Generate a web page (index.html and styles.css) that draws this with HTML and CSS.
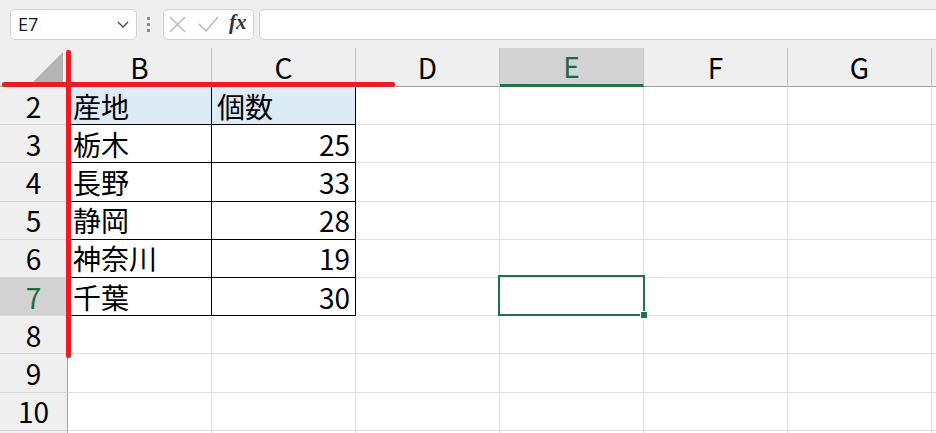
FILE: index.html
```html
<!DOCTYPE html>
<html lang="ja">
<head>
<meta charset="utf-8">
<title>Sheet</title>
<link rel="stylesheet" href="styles.css">
</head>
<body>
<div class="app">
  <div class="toolbar">
    <div class="namebox">
      <span class="name">E7</span>
      <svg class="chev" width="12" height="7" viewBox="0 0 12 7"><path d="M1 1l5 5 5-5" fill="none" stroke="#444" stroke-width="1.3"/></svg>
    </div>
    <div class="grip"><i></i><i></i><i></i></div>
    <div class="fxbox">
      <svg class="ic-x" width="17" height="17" viewBox="0 0 17 17"><path d="M1 1L16 16M16 1L1 16" fill="none" stroke="#b5b5b5" stroke-width="1.4"/></svg>
      <svg class="ic-ok" width="21" height="16" viewBox="0 0 21 16"><path d="M1 8l7 7L20 1" fill="none" stroke="#b5b5b5" stroke-width="1.4"/></svg>
      <span class="fx">fx</span>
    </div>
    <div class="formula"></div>
  </div>

  <div class="sheet">
    <div class="row hdr">
      <div class="cell corner"><svg width="30" height="30" viewBox="0 0 30 30"><polygon points="0,30 30,30 30,0" fill="#b4b4b4"/></svg></div>
      <div class="cell ch">B</div>
      <div class="cell ch">C</div>
      <div class="cell ch">D</div>
      <div class="cell ch on">E</div>
      <div class="cell ch">F</div>
      <div class="cell ch">G</div>
      <div class="cell ch"></div>
    </div>
    <div class="row">
      <div class="cell rh">2</div>
      <div class="cell t th">産地</div>
      <div class="cell t th">個数</div>
      <div class="cell"></div><div class="cell"></div><div class="cell"></div><div class="cell"></div><div class="cell"></div>
    </div>
    <div class="row">
      <div class="cell rh">3</div>
      <div class="cell t">栃木</div>
      <div class="cell t num">25</div>
      <div class="cell"></div><div class="cell"></div><div class="cell"></div><div class="cell"></div><div class="cell"></div>
    </div>
    <div class="row">
      <div class="cell rh">4</div>
      <div class="cell t">長野</div>
      <div class="cell t num">33</div>
      <div class="cell"></div><div class="cell"></div><div class="cell"></div><div class="cell"></div><div class="cell"></div>
    </div>
    <div class="row">
      <div class="cell rh">5</div>
      <div class="cell t">静岡</div>
      <div class="cell t num">28</div>
      <div class="cell"></div><div class="cell"></div><div class="cell"></div><div class="cell"></div><div class="cell"></div>
    </div>
    <div class="row">
      <div class="cell rh">6</div>
      <div class="cell t">神奈川</div>
      <div class="cell t num">19</div>
      <div class="cell"></div><div class="cell"></div><div class="cell"></div><div class="cell"></div><div class="cell"></div>
    </div>
    <div class="row">
      <div class="cell rh on">7</div>
      <div class="cell t">千葉</div>
      <div class="cell t num">30</div>
      <div class="cell"></div><div class="cell"></div><div class="cell"></div><div class="cell"></div><div class="cell"></div>
    </div>
    <div class="row">
      <div class="cell rh">8</div>
      <div class="cell"></div><div class="cell"></div><div class="cell"></div><div class="cell"></div><div class="cell"></div><div class="cell"></div><div class="cell"></div>
    </div>
    <div class="row">
      <div class="cell rh">9</div>
      <div class="cell"></div><div class="cell"></div><div class="cell"></div><div class="cell"></div><div class="cell"></div><div class="cell"></div><div class="cell"></div>
    </div>
    <div class="row">
      <div class="cell rh">10</div>
      <div class="cell"></div><div class="cell"></div><div class="cell"></div><div class="cell"></div><div class="cell"></div><div class="cell"></div><div class="cell"></div>
    </div>
    <div class="row">
      <div class="cell rh"></div>
      <div class="cell"></div><div class="cell"></div><div class="cell"></div><div class="cell"></div><div class="cell"></div><div class="cell"></div><div class="cell"></div>
    </div>

    <div class="sel"><i class="handle"></i></div>
  </div>

  <div class="red-h"></div>
  <div class="red-v"></div>
</div>
</body>
</html>
```

FILE: styles.css
```css
* { box-sizing: border-box; }
html, body { margin: 0; padding: 0; }
body {
  width: 936px;
  height: 433px;
  overflow: hidden;
  background: #fff;
  font-family: "Noto Sans CJK JP", "Noto Sans", sans-serif;
  color: #000;
}
.app {
  position: relative;
  width: 936px;
  height: 433px;
  overflow: hidden;
}

/* toolbar */
.toolbar {
  display: flex;
  align-items: center;
  height: 48px;
  background: #efefef;
  padding-left: 10px;
}
.namebox {
  flex: none;
  width: 127px;
  height: 31px;
  background: #fff;
  border: 1px solid #d3d3d3;
  border-radius: 5px;
  display: flex;
  align-items: center;
  justify-content: space-between;
  padding: 0 7px 0 7px;
}
.name {
  font-family: "Open Sans", "Noto Sans", sans-serif;
  font-size: 18px;
  color: #1a1a1a;
  line-height: 1;
}
.chev { margin-top: 1px; }
.grip {
  flex: none;
  width: 4px;
  margin: 0 12px 0 10px;
  display: flex;
  flex-direction: column;
  gap: 3px;
}
.grip i {
  display: block;
  width: 3px;
  height: 3px;
  background: #8c8c8c;
}
.fxbox {
  flex: none;
  width: 91px;
  height: 31px;
  background: #fff;
  border: 1px solid #d3d3d3;
  border-radius: 5px;
  display: flex;
  align-items: center;
  padding-left: 5px;
}
.ic-ok { margin-left: 12px; }
.fx {
  margin-left: 10px;
  font-family: "Liberation Serif", serif;
  font-style: italic;
  font-weight: bold;
  font-size: 21px;
  color: #333;
  line-height: 1;
  margin-top: -3px;
}
.formula {
  flex: 1;
  height: 31px;
  margin-left: 5px;
  margin-right: -6px;
  background: #fff;
  border: 1px solid #d3d3d3;
  border-radius: 5px;
}

/* sheet */
.sheet {
  position: relative;
  background: #fff;
}
.row {
  display: flex;
  height: 38.2px;
}
.row.hdr {
  height: 39px;
  background: #efefef;
}
.cell {
  flex: none;
  width: 144px;
  height: 100%;
  border-right: 1px solid #e1e1e1;
  border-bottom: 1px solid #e1e1e1;
  display: flex;
  align-items: center;
  padding: 0 5px;
  font-size: 28px;
  line-height: 1;
  white-space: nowrap;
}
.corner {
  width: 68px;
  justify-content: flex-end;
  align-items: flex-end;
  padding: 0 4px 4px 0;
  border-right-color: #d0d0d0;
  border-bottom-color: #a0a0a0;
}
.ch {
  justify-content: center;
  border-right-color: #c2c2c2;
  border-bottom-color: #a0a0a0;
}
.ch.on {
  background: #d2d2d2;
  color: #1d6b40;
  border-bottom: 3px solid #217346;
}
.rh {
  width: 68px;
  justify-content: center;
  background: #efefef;
  border-right-color: #a5a5a5;
  border-bottom-color: #d6d6d6;
}
.rh.on {
  background: #d2d2d2;
  color: #1d6b40;
}
.t {
  border-right-color: #000;
  border-bottom-color: #000;
}
.th { background: #ddebf7; }
.num { justify-content: flex-end; }

/* selection */
.sel {
  position: absolute;
  left: 498px;
  top: 227px;
  width: 147px;
  height: 41px;
  border: 2px solid #217346;
}
.handle {
  position: absolute;
  right: -5px;
  bottom: -5px;
  width: 8px;
  height: 8px;
  background: #217346;
  border: 1px solid #fff;
}

/* red annotation lines */
.red-h {
  position: absolute;
  left: 2px;
  top: 82px;
  width: 393px;
  height: 5px;
  background: #ec1c24;
  border-radius: 2px;
}
.red-v {
  position: absolute;
  left: 66px;
  top: 50px;
  width: 5px;
  height: 308px;
  background: #ec1c24;
  border-radius: 2px;
}
```
